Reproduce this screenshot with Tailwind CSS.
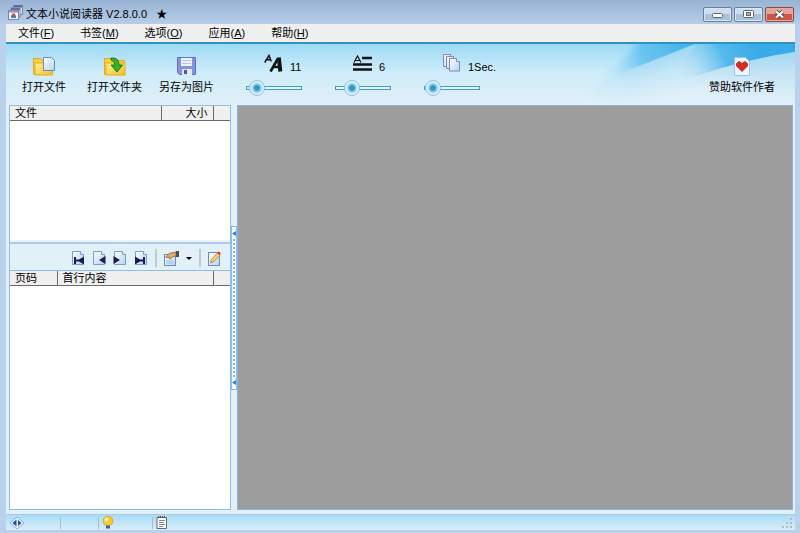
<!DOCTYPE html>
<html lang="zh-CN">
<head>
<meta charset="utf-8">
<title>文本小说阅读器 V2.8.0.0</title>
<script src="https://cdn.jsdelivr.net/npm/@tailwindcss/browser@4"></script>
</head>
<body class="h-screen overflow-hidden flex flex-col bg-[#b9d1ea] pl-[6px] pr-[5px] pb-[3px] text-[11px] leading-4 text-black font-['Liberation_Sans','Noto_Sans_CJK_SC',sans-serif]">

<svg class="absolute size-0" aria-hidden="true">
  <defs>
    <linearGradient id="page" x1="0" y1="0" x2="1" y2="1"><stop offset="0" stop-color="#fff"/><stop offset="1" stop-color="#b4d2f4"/></linearGradient>
    <linearGradient id="gold" x1="0" y1="0" x2="1" y2="1"><stop offset="0" stop-color="#ffef9a"/><stop offset="1" stop-color="#f6bd1e"/></linearGradient>
    <symbol id="sheet" viewBox="0 0 14 14"><path d="M1.500.5h8l3 3v10h-11z" fill="url(#page)" stroke="#7d9cd0"/><path d="M9.500.5v3h3" fill="#fff" stroke="#7d9cd0"/></symbol>
  </defs>
</svg>

<header class="-ml-[6px] -mr-[5px] pl-2 pr-[6px] h-6 shrink-0 flex items-center bg-linear-to-b from-[#98b3d3] to-[#b6cde8]">
  <svg class="w-[15px] h-[15px] mr-[3px]" viewBox="0 0 15 15">
    <rect x="5.500" y=".5" width="9" height="9" fill="#dfe3f0" stroke="#7b82a8"/><path d="M6 1.500h8" stroke="#5a6196" stroke-width="2"/>
    <rect x="3" y="3" width="9" height="9" fill="#e8eaf5" stroke="#7b82a8"/><path d="M3 4h9" stroke="#686fa0" stroke-width="2"/>
    <rect x=".5" y="5.500" width="10" height="9" fill="#f3f4fb" stroke="#7b85b0"/><path d="M1 6.500h9" stroke="#8c97c2" stroke-width="2"/>
    <path d="M3 10l2.500 1L8 10v3H3z" fill="#4b78c6"/><circle cx="5.500" cy="10" r="1.700" fill="#d4543f"/>
  </svg>
  <h1 class="pt-[3px]">文本小说阅读器 V2.8.0.0 &nbsp;&nbsp;★</h1>
  <div class="ml-auto mt-1 flex gap-[2px]">
    <button aria-label="最小化" class="w-[29px] h-[15px] rounded-xs border border-[#6b7f97] bg-linear-to-b from-[#cfdeee] from-50% to-[#a9c0da] to-50% flex items-center justify-center shadow-[inset_0_0_0_1px_#dbe7f4]"><svg class="w-[11px] h-2" viewBox="0 0 11 8"><rect x=".5" y="3.500" width="10" height="4" rx="1" fill="#fff" stroke="#5d646e"/></svg></button>
    <button aria-label="最大化" class="w-[29px] h-[15px] rounded-xs border border-[#6b7f97] bg-linear-to-b from-[#cfdeee] from-50% to-[#a9c0da] to-50% flex items-center justify-center shadow-[inset_0_0_0_1px_#dbe7f4]"><svg class="w-[11px] h-2" viewBox="0 0 11 8"><rect x=".5" y=".5" width="10" height="7" rx="1" fill="#fff" stroke="#5d646e"/><rect x="3.500" y="2.500" width="4" height="3" fill="#9fb5d0" stroke="#5d646e"/></svg></button>
    <button aria-label="关闭" class="w-[29px] h-[15px] rounded-xs border border-[#8a4a48] bg-linear-to-b from-[#e3a59b] from-45% to-[#cd5442] to-50% flex items-center justify-center shadow-[inset_0_0_0_1px_#e5aaa0]"><svg class="w-[11px] h-[9px]" viewBox="0 0 11 9"><path d="M2 1.500l7 6M9 1.500l-7 6" stroke="#5b4a55" stroke-width="4"/><path d="M2 1.500l7 6M9 1.500l-7 6" stroke="#fff" stroke-width="2.200"/></svg></button>
  </div>
</header>

<nav class="h-[18px] shrink-0 flex items-center gap-[26px] pl-3 bg-[#f0f0f0]">
  <button>文件(<u>F</u>)</button>
  <button>书签(<u>M</u>)</button>
  <button>选项(<u>O</u>)</button>
  <button>应用(<u>A</u>)</button>
  <button>帮助(<u>H</u>)</button>
</nav>

<div role="toolbar" class="relative h-[63px] shrink-0 flex border-t-2 border-[#2f93c2] bg-linear-to-b from-[#9cdaf6] via-[#cdecf9] via-45% to-[#e2f0f8]">
  <svg class="absolute right-0 top-0 w-[236px] h-[61px]" viewBox="0 0 236 61" preserveAspectRatio="none" aria-hidden="true">
    <defs>
      <linearGradient id="beam" gradientUnits="userSpaceOnUse" x1="125" y1="0" x2="40" y2="30"><stop offset="0" stop-color="#45b4ea"/><stop offset=".5" stop-color="#6cc6f0"/><stop offset="1" stop-color="#b5e2f7" stop-opacity="0"/></linearGradient>
      <linearGradient id="haze" gradientUnits="userSpaceOnUse" x1="110" y1="0" x2="122" y2="50"><stop offset="0" stop-color="#8fd2f3"/><stop offset=".5" stop-color="#c3e6f7"/><stop offset="1" stop-color="#e2f0f8"/></linearGradient>
      <linearGradient id="lower" gradientUnits="userSpaceOnUse" x1="0" y1="8" x2="0" y2="58"><stop offset="0" stop-color="#84cdf1"/><stop offset=".5" stop-color="#b9e0f5"/><stop offset="1" stop-color="#e2f0f8"/></linearGradient>
      <linearGradient id="sweep" gradientUnits="userSpaceOnUse" x1="195" y1="0" x2="120" y2="34"><stop offset="0" stop-color="#37abe7"/><stop offset=".4" stop-color="#55baec"/><stop offset="1" stop-color="#b5e0f6" stop-opacity="0"/></linearGradient>
      <linearGradient id="fade1" gradientUnits="userSpaceOnUse" x1="30" y1="0" x2="75" y2="0"><stop offset="0" stop-color="#000"/><stop offset="1" stop-color="#fff"/></linearGradient>
      <linearGradient id="fade2" gradientUnits="userSpaceOnUse" x1="115" y1="0" x2="185" y2="0"><stop offset="0" stop-color="#000"/><stop offset="1" stop-color="#fff"/></linearGradient>
      <mask id="m1" maskUnits="userSpaceOnUse" x="0" y="0" width="236" height="61"><path d="M0 0h236v61H0z" fill="url(#fade1)"/></mask>
      <mask id="m2" maskUnits="userSpaceOnUse" x="0" y="0" width="236" height="61"><path d="M0 0h236v61H0z" fill="url(#fade2)"/></mask>
      <filter id="soft" x="-10%" y="-10%" width="120%" height="120%"><feGaussianBlur stdDeviation="4 0"/></filter>
    </defs>
    <path d="M78 0h62L44 38H24Q58 28 78 0z" fill="url(#beam)" filter="url(#soft)"/>
    <path d="M20 47Q70 26 136 0H236v61H20z" fill="url(#haze)" mask="url(#m1)"/>
    <path d="M110 41Q180 16 236 8v53H110z" fill="url(#lower)" opacity=".6" mask="url(#m2)"/>
    <path d="M110 41L136 0H236v8Q180 16 110 41z" fill="url(#sweep)"/>
  </svg>
  <div class="flex gap-4 pl-4 pt-3">
    <button class="flex flex-col items-center gap-[3px] w-11 whitespace-nowrap">
      <svg class="w-[22px] h-5" viewBox="0 0 22 20"><path d="M.5 2.500h7l2 2h8v14H.5z" fill="#f8cf45" stroke="#dfa928"/><path d="M2 7h17.500v12H2z" fill="url(#gold)" stroke="#e5ae1d"/><path d="M10.500 1.500h8l3 3v10h-11z" fill="url(#page)" stroke="#6289c8"/></svg>
      <span>打开文件</span></button>
    <button class="ml-1 flex flex-col items-center gap-[3px] w-[57px] whitespace-nowrap">
      <svg class="w-[22px] h-5" viewBox="0 0 22 20"><path d="M.5 2.500h7l2 2h11v14H.5z" fill="#f8cf45" stroke="#dfa928"/><path d="M2 7h19v12H2z" fill="url(#gold)" stroke="#e5ae1d"/><path d="M7 2q8-1 8 7h3.500L13 16 7 9h4q0-4-4-5z" fill="#35b427" stroke="#197b17"/></svg>
      <span>打开文件夹</span></button>
    <button class="flex flex-col items-center gap-[3px] w-[55px] whitespace-nowrap">
      <svg class="w-5 h-5" viewBox="0 0 20 20"><path d="M.5 1.500h18v17H2.500l-2-2z" fill="#8591e2" stroke="#6570c0"/><rect x="4" y="2" width="11" height="8" fill="#eef1ff"/><path d="M5 4.500h9M5 7.500h9" stroke="#b7c1ec"/><rect x="5" y="13" width="10" height="6" fill="#e5e8f4"/><rect x="7" y="14" width="3" height="4" fill="#4754ad"/></svg>
      <span>另存为图片</span></button>
  </div>
  <div class="flex gap-[33px] pl-8 pt-[6px]">
    <label class="flex flex-col w-14 whitespace-nowrap">
      <span class="flex items-end gap-[7px] h-[25px] pl-[18px]">
        <svg class="w-[19px] h-[19px] mb-[2px] shrink-0" viewBox="0 0 19 19" fill="none" stroke="#111"><path d="M.7 8.500L5 1.500l2.300 6M2.500 5.800h4" stroke-width="1.500"/><path d="M6.500 17.500L14 4.500" stroke-width="2.600"/><path d="M14.800 3.500l1.500 14" stroke-width="4"/><path d="M9 13h7" stroke-width="2.400"/></svg>
        <span>11</span></span>
      <input type="range" aria-label="字号" min="0" max="100" value="5" class="w-14 h-4 mt-[5px] appearance-none bg-transparent [&::-webkit-slider-runnable-track]:h-1 [&::-webkit-slider-runnable-track]:border [&::-webkit-slider-runnable-track]:border-[#3d9bc9] [&::-webkit-slider-runnable-track]:bg-[#e8f6fc] [&::-webkit-slider-thumb]:appearance-none [&::-webkit-slider-thumb]:size-4 [&::-webkit-slider-thumb]:-mt-[7px] [&::-webkit-slider-thumb]:rounded-full [&::-webkit-slider-thumb]:border [&::-webkit-slider-thumb]:border-[#86c3e3] [&::-webkit-slider-thumb]:bg-[radial-gradient(circle,#2b94c8_0_2px,#5fb4dc_3px,#c3e6f6_5px,#e9f7fd_7px)]">
    </label>
    <label class="flex flex-col w-14 whitespace-nowrap">
      <span class="flex items-end gap-[7px] h-[25px] pl-[18px]">
        <svg class="w-[19px] h-[17px] mb-[3px] shrink-0" viewBox="0 0 19 17" fill="none" stroke="#111"><path d="M1 7.500L4.500 1 8 7.500M2.500 5.500h4" stroke-width="1.200"/><path d="M9 3h10M0 9.500h19M0 14.500h19" stroke-width="2.600"/></svg>
        <span>6</span></span>
      <input type="range" aria-label="行距" min="0" max="100" value="20" class="w-14 h-4 mt-[5px] appearance-none bg-transparent [&::-webkit-slider-runnable-track]:h-1 [&::-webkit-slider-runnable-track]:border [&::-webkit-slider-runnable-track]:border-[#3d9bc9] [&::-webkit-slider-runnable-track]:bg-[#e8f6fc] [&::-webkit-slider-thumb]:appearance-none [&::-webkit-slider-thumb]:size-4 [&::-webkit-slider-thumb]:-mt-[7px] [&::-webkit-slider-thumb]:rounded-full [&::-webkit-slider-thumb]:border [&::-webkit-slider-thumb]:border-[#86c3e3] [&::-webkit-slider-thumb]:bg-[radial-gradient(circle,#2b94c8_0_2px,#5fb4dc_3px,#c3e6f6_5px,#e9f7fd_7px)]">
    </label>
    <label class="flex flex-col w-14 whitespace-nowrap">
      <span class="flex items-end gap-[7px] h-[25px] pl-[18px]">
        <svg class="w-[19px] h-[18px] mb-[3px] shrink-0" viewBox="0 0 19 18" fill="url(#page)" stroke="#8088be"><path d="M1.500.5h7v12h-7z"/><path d="M4.500 2.500h7v12h-7z"/><path d="M7.500 4.500h7l3 3v9.500h-10z"/><path d="M14.500 4.500v3h3" fill="#fff"/></svg>
        <span>1Sec.</span></span>
      <input type="range" aria-label="自动翻页间隔" min="0" max="100" value="0" class="w-14 h-4 mt-[5px] appearance-none bg-transparent [&::-webkit-slider-runnable-track]:h-1 [&::-webkit-slider-runnable-track]:border [&::-webkit-slider-runnable-track]:border-[#3d9bc9] [&::-webkit-slider-runnable-track]:bg-[#e8f6fc] [&::-webkit-slider-thumb]:appearance-none [&::-webkit-slider-thumb]:size-4 [&::-webkit-slider-thumb]:-mt-[7px] [&::-webkit-slider-thumb]:rounded-full [&::-webkit-slider-thumb]:border [&::-webkit-slider-thumb]:border-[#86c3e3] [&::-webkit-slider-thumb]:bg-[radial-gradient(circle,#2b94c8_0_2px,#5fb4dc_3px,#c3e6f6_5px,#e9f7fd_7px)]">
    </label>
  </div>
  <button class="relative ml-auto mr-5 pt-3 flex flex-col items-center gap-[3px] whitespace-nowrap">
    <svg class="w-4 h-5" viewBox="0 0 16 20"><path d="M.5 1.500h11l4 4v14H.5z" fill="#edf4fd" stroke="#9fc0e8"/><path d="M8 15.500L2.500 10V7.500L5 5.500l3 2 3-2 2.500 2V10z" fill="#dc2a20" stroke="#a5211c" stroke-width=".8"/></svg>
    <span>赞助软件作者</span></button>
</div>

<main class="flex-1 min-h-0 flex pl-[3px] pr-[2px] pb-1 bg-[#e2f0f8]">
  <aside class="w-[222px] shrink-0 flex flex-col border border-[#8fbde8] bg-white">
    <table class="w-full table-fixed border-collapse bg-[#f0f0f0] text-left leading-[13px]">
      <thead><tr class="h-[14px] border-b border-[#696969]">
        <th class="p-0 pt-px pl-[5px] font-normal border-r border-[#696969]">文件</th>
        <th class="w-[52px] p-0 pt-px pr-[5px] font-normal text-right border-r border-[#696969]">大小</th>
        <th class="w-[17px] p-0"></th>
      </tr></thead>
    </table>
    <div class="h-[119px]"></div>
    <div class="h-1 border-b-2 border-[#a9cdee] bg-[#f0f0f0] shrink-0"></div>
    <div role="toolbar" class="h-[27px] shrink-0 flex items-center justify-end gap-[7px] pt-[2px] pr-[9px] bg-[#e2f0f8] border-b border-[#8fbde8]">
      <button aria-label="首页"><svg class="w-[14px] h-[14px]" viewBox="0 0 14 14"><use href="#sheet"/><path d="M3 6h2v7H3zM13 5.500v8L8 10.500H5v-2h3z" fill="#1a1e4a"/></svg></button>
      <button aria-label="上一页"><svg class="w-[14px] h-[14px]" viewBox="0 0 14 14"><use href="#sheet"/><path d="M13.500 5v8L7 9z" fill="#1a1e4a"/></svg></button>
      <button aria-label="下一页"><svg class="w-[14px] h-[14px]" viewBox="0 0 14 14"><use href="#sheet"/><path d="M.5 5v8L7 9z" fill="#1a1e4a"/></svg></button>
      <button aria-label="末页"><svg class="w-[14px] h-[14px]" viewBox="0 0 14 14"><use href="#sheet"/><path d="M1 5.500v8l5-3h3v-2H6zM9 6h2v7H9z" fill="#1a1e4a"/></svg></button>
      <span class="w-[2px] h-[18px] bg-[#c2c8cd]"></span>
      <button aria-label="属性" class="flex items-center gap-[6px]"><svg class="w-4 h-[15px]" viewBox="0 0 16 15"><rect x=".5" y="3.500" width="11" height="11" fill="url(#page)" stroke="#6b8dc6"/><path d="M2 12h7M2 10h7" stroke="#a5bddf"/><path d="M1.500 6l3.500-3.500 7-1.500v4l-4 1-1.500 2-1.500-.5.500-1.500-2.500.8z" fill="#e3ad66" stroke="#8b5c26" stroke-width=".7"/><path d="M12 0h3v6h-3z" fill="#4c4c55"/></svg><svg class="w-[6px] h-[3px]" viewBox="0 0 6 3"><path d="M0 0h6L3 3z"/></svg></button>
      <span class="w-[2px] h-[18px] bg-[#c2c8cd]"></span>
      <button aria-label="编辑"><svg class="w-[13px] h-[15px]" viewBox="0 0 13 15"><rect x=".5" y="1.500" width="11" height="13" fill="url(#page)" stroke="#6b8dc6"/><path d="M2.500 12l1-3.500 6-6.500 2.500 2-6 6.500z" fill="#f7cf7a" stroke="#b97b2c" stroke-width=".8"/><path d="M9 2l1.500-1.500L13 2.500 11.500 4z" fill="#dc3a2c"/></svg></button>
    </div>
    <table class="w-full table-fixed border-collapse bg-[#f0f0f0] text-left leading-[13px]">
      <thead><tr class="h-[14px] border-b border-[#696969]">
        <th class="w-[47px] p-0 pt-px pl-[5px] font-normal border-r border-[#696969]">页码</th>
        <th class="p-0 pt-px pl-[5px] font-normal border-r border-[#696969]">首行内容</th>
        <th class="w-[17px] p-0"></th>
      </tr></thead>
    </table>
  </aside>
  <div role="separator" class="w-[6px] shrink-0 flex items-center">
    <div class="w-[6px] h-[164px] flex flex-col items-center justify-between border border-[#8fbde8] bg-[#f4faff] py-1">
      <svg class="w-1 h-[5px]" viewBox="0 0 4 5"><path d="M4 0v5L0 2.500z" fill="#2388e0"/></svg>
      <span class="w-0 h-[138px] border-l-2 border-dotted border-[#7dbbea]"></span>
      <svg class="w-1 h-[5px]" viewBox="0 0 4 5"><path d="M4 0v5L0 2.500z" fill="#2388e0"/></svg>
    </div>
  </div>
  <section aria-label="正文" class="flex-1 border border-[#8fb0e0] bg-[#9d9d9d]"></section>
</main>

<footer class="h-4 shrink-0 flex items-center border-t border-[#a4cbe8] bg-linear-to-b from-[#a8dcf7] to-[#d8eefa] pl-1">
  <svg class="w-[14px] h-3" viewBox="0 0 14 12"><path d="M7 0l7 6-7 6-7-6z" fill="#eaf2ff" stroke="#7a9ad2" stroke-width=".8"/><path d="M6.500 2.500v7L2.500 6zM8 3v6l3.500-3z" fill="#23509f"/></svg>
  <span class="ml-[36px] w-px h-3 bg-[#a9bdcb]"></span>
  <span class="ml-[37px] w-px h-3 bg-[#a9bdcb]"></span>
  <svg class="ml-[3px] w-3 h-[13px]" viewBox="0 0 12 13"><circle cx="6" cy="5" r="4.800" fill="#fbc928" stroke="#d99b16" stroke-width=".8"/><circle cx="4.500" cy="3.500" r="2" fill="#fff3b0"/><path d="M4 9.500h4v3H4z" fill="#43609d"/></svg>
  <span class="ml-[38px] w-px h-3 bg-[#a9bdcb]"></span>
  <svg class="ml-[3px] w-[11px] h-[13px]" viewBox="0 0 11 13"><path d="M1 1.500h9.500v11H1z" fill="#fff" stroke="#666"/><path d="M2 1h8" stroke="#555" stroke-width="2" stroke-dasharray="1 1"/><path d="M3 4.500h6M3 6.500h5M3 8.500h6M3 10.500h4" stroke="#7c8790"/></svg>
  <svg class="ml-auto mr-[2px] w-[11px] h-[10px]" viewBox="0 0 11 10" fill="#b4bcc2"><path d="M8 0h2v2H8zM4 4h2v2H4zM8 4h2v2H8zM0 8h2v2H0zM4 8h2v2H4zM8 8h2v2H8z"/></svg>
</footer>
</body>
</html>
